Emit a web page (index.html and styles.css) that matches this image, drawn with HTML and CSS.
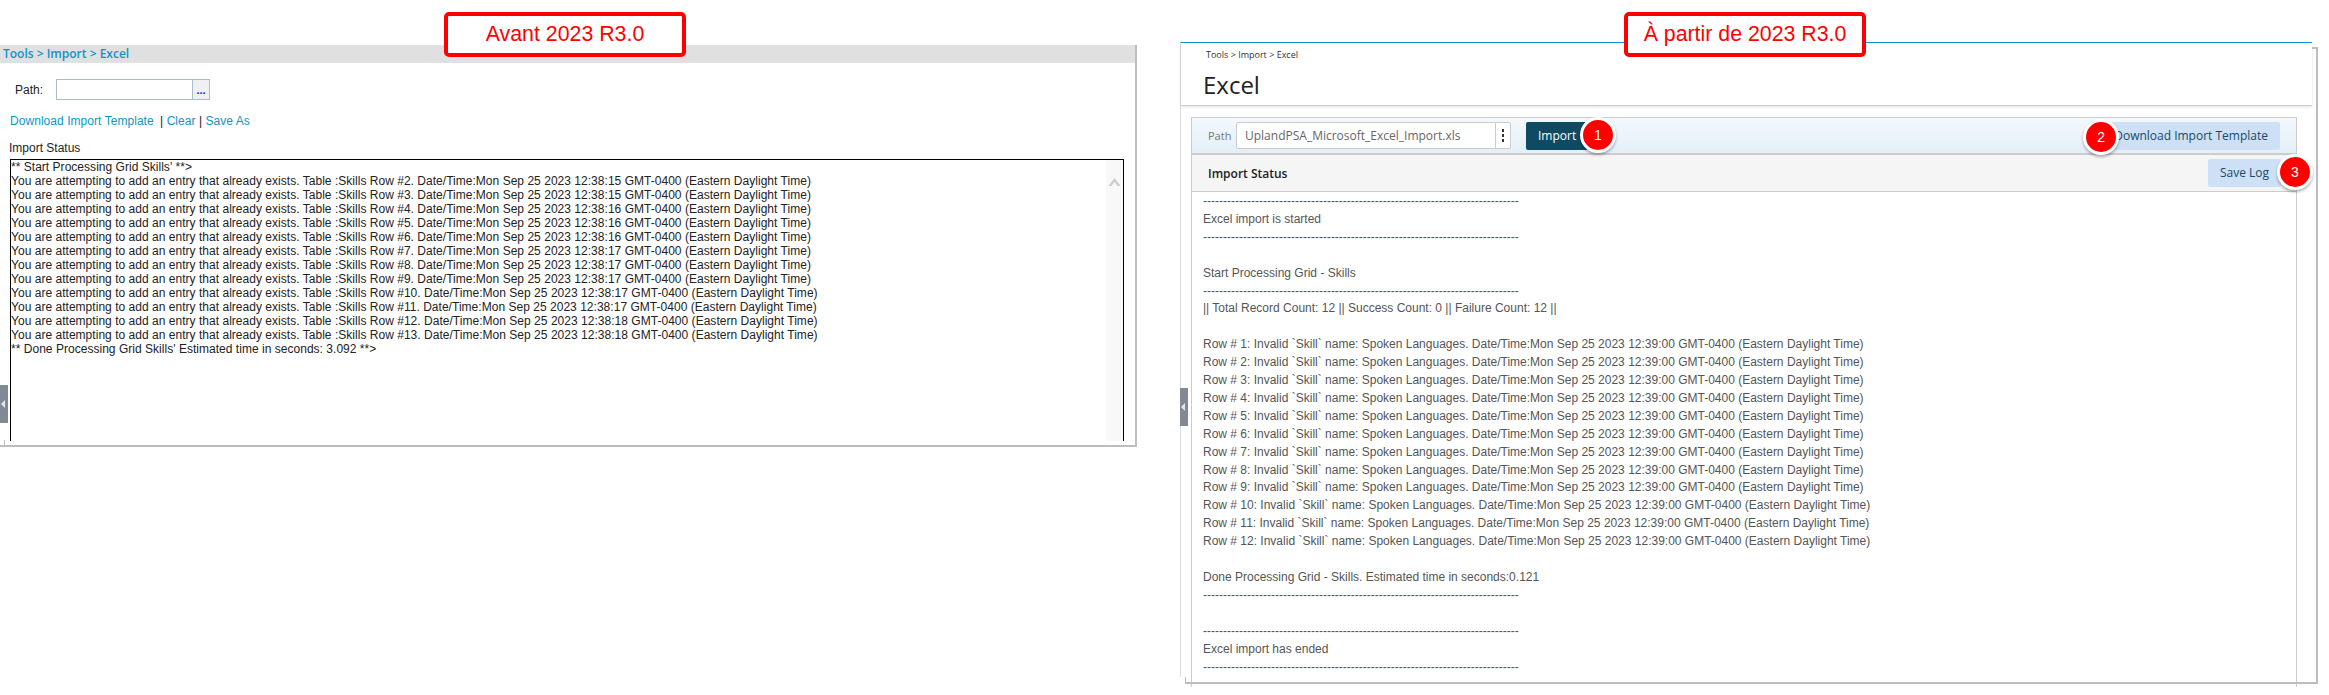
FILE: index.html
```html
<!DOCTYPE html>
<html lang="fr">
<head>
<meta charset="utf-8">
<title>Import Excel</title>
<link rel="stylesheet" href="styles.css">
</head>
<body>
<div class="stage">
  <section class="old">
    <div class="old-head">Tools &gt; Import &gt; Excel</div>
    <div class="old-path">
      <span class="old-path-label">Path:</span>
      <span class="old-input"></span>
      <span class="old-browse">...</span>
    </div>
    <div class="old-links"><a class="old-link-first">Download Import Template</a> | <a>Clear</a> | <a>Save As</a></div>
    <div class="old-status">Import Status</div>
    <div class="old-box">
      <div class="old-log">
        <div>** Start Processing Grid Skills' **&gt;</div>
        <div>You are attempting to add an entry that already exists. Table :Skills Row #2. Date/Time:Mon Sep 25 2023 12:38:15 GMT-0400 (Eastern Daylight Time)</div>
        <div>You are attempting to add an entry that already exists. Table :Skills Row #3. Date/Time:Mon Sep 25 2023 12:38:15 GMT-0400 (Eastern Daylight Time)</div>
        <div>You are attempting to add an entry that already exists. Table :Skills Row #4. Date/Time:Mon Sep 25 2023 12:38:16 GMT-0400 (Eastern Daylight Time)</div>
        <div>You are attempting to add an entry that already exists. Table :Skills Row #5. Date/Time:Mon Sep 25 2023 12:38:16 GMT-0400 (Eastern Daylight Time)</div>
        <div>You are attempting to add an entry that already exists. Table :Skills Row #6. Date/Time:Mon Sep 25 2023 12:38:16 GMT-0400 (Eastern Daylight Time)</div>
        <div>You are attempting to add an entry that already exists. Table :Skills Row #7. Date/Time:Mon Sep 25 2023 12:38:17 GMT-0400 (Eastern Daylight Time)</div>
        <div>You are attempting to add an entry that already exists. Table :Skills Row #8. Date/Time:Mon Sep 25 2023 12:38:17 GMT-0400 (Eastern Daylight Time)</div>
        <div>You are attempting to add an entry that already exists. Table :Skills Row #9. Date/Time:Mon Sep 25 2023 12:38:17 GMT-0400 (Eastern Daylight Time)</div>
        <div>You are attempting to add an entry that already exists. Table :Skills Row #10. Date/Time:Mon Sep 25 2023 12:38:17 GMT-0400 (Eastern Daylight Time)</div>
        <div>You are attempting to add an entry that already exists. Table :Skills Row #11. Date/Time:Mon Sep 25 2023 12:38:17 GMT-0400 (Eastern Daylight Time)</div>
        <div>You are attempting to add an entry that already exists. Table :Skills Row #12. Date/Time:Mon Sep 25 2023 12:38:18 GMT-0400 (Eastern Daylight Time)</div>
        <div>You are attempting to add an entry that already exists. Table :Skills Row #13. Date/Time:Mon Sep 25 2023 12:38:18 GMT-0400 (Eastern Daylight Time)</div>
        <div>** Done Processing Grid Skills' Estimated time in seconds: 3.092 **&gt;</div>
      </div>
      <div class="old-track">
        <svg class="chevron" width="11" height="9" viewBox="0 0 11 9"><path d="M0 8 L5.5 1 L11 8 L11 9 L8.5 9 L5.5 5 L2.5 9 L0 9 Z"/></svg>
      </div>
    </div>
    <div class="handle handle-old"><span class="handle-arrow"></span></div>
    <span class="tick tick-old"></span>
  </section>

  <section class="new">
    <div class="new-page">
      <header class="new-head">
        <div class="crumb">Tools &gt; Import &gt; Excel</div>
        <h1 class="new-title">Excel</h1>
      </header>
      <div class="new-body">
        <div class="toolbar">
          <span class="path-label">Path</span>
          <div class="path-input">
            <span class="path-value">UplandPSA_Microsoft_Excel_Import.xls</span>
            <span class="path-more"><i></i><i></i><i></i></span>
          </div>
          <button class="btn btn-dark">Import<span class="badge badge-1">1</span></button>
          <button class="btn btn-light btn-download">Download Import Template<span class="badge badge-2">2</span></button>
        </div>
        <div class="status-bar">
          <span class="status-title">Import Status</span>
          <button class="btn btn-light">Save Log<span class="badge badge-3">3</span></button>
        </div>
        <div class="new-log">
          <div>-------------------------------------------------------------------------------</div>
          <div>Excel import is started</div>
          <div>-------------------------------------------------------------------------------</div>
          <div class="blank"></div>
          <div>Start Processing Grid - Skills</div>
          <div>-------------------------------------------------------------------------------</div>
          <div>|| Total Record Count: 12 || Success Count: 0 || Failure Count: 12 ||</div>
          <div class="blank"></div>
          <div>Row # 1: Invalid `Skill` name: Spoken Languages. Date/Time:Mon Sep 25 2023 12:39:00 GMT-0400 (Eastern Daylight Time)</div>
          <div>Row # 2: Invalid `Skill` name: Spoken Languages. Date/Time:Mon Sep 25 2023 12:39:00 GMT-0400 (Eastern Daylight Time)</div>
          <div>Row # 3: Invalid `Skill` name: Spoken Languages. Date/Time:Mon Sep 25 2023 12:39:00 GMT-0400 (Eastern Daylight Time)</div>
          <div>Row # 4: Invalid `Skill` name: Spoken Languages. Date/Time:Mon Sep 25 2023 12:39:00 GMT-0400 (Eastern Daylight Time)</div>
          <div>Row # 5: Invalid `Skill` name: Spoken Languages. Date/Time:Mon Sep 25 2023 12:39:00 GMT-0400 (Eastern Daylight Time)</div>
          <div>Row # 6: Invalid `Skill` name: Spoken Languages. Date/Time:Mon Sep 25 2023 12:39:00 GMT-0400 (Eastern Daylight Time)</div>
          <div>Row # 7: Invalid `Skill` name: Spoken Languages. Date/Time:Mon Sep 25 2023 12:39:00 GMT-0400 (Eastern Daylight Time)</div>
          <div>Row # 8: Invalid `Skill` name: Spoken Languages. Date/Time:Mon Sep 25 2023 12:39:00 GMT-0400 (Eastern Daylight Time)</div>
          <div>Row # 9: Invalid `Skill` name: Spoken Languages. Date/Time:Mon Sep 25 2023 12:39:00 GMT-0400 (Eastern Daylight Time)</div>
          <div>Row # 10: Invalid `Skill` name: Spoken Languages. Date/Time:Mon Sep 25 2023 12:39:00 GMT-0400 (Eastern Daylight Time)</div>
          <div>Row # 11: Invalid `Skill` name: Spoken Languages. Date/Time:Mon Sep 25 2023 12:39:00 GMT-0400 (Eastern Daylight Time)</div>
          <div>Row # 12: Invalid `Skill` name: Spoken Languages. Date/Time:Mon Sep 25 2023 12:39:00 GMT-0400 (Eastern Daylight Time)</div>
          <div class="blank"></div>
          <div>Done Processing Grid - Skills. Estimated time in seconds:0.121</div>
          <div>-------------------------------------------------------------------------------</div>
          <div class="blank"></div>
          <div>-------------------------------------------------------------------------------</div>
          <div>Excel import has ended</div>
          <div>-------------------------------------------------------------------------------</div>
        </div>
      </div>
    </div>
    <div class="handle handle-new"><span class="handle-arrow"></span></div>
    <span class="tick tick-new-top"></span>
    <span class="tick tick-new-left"></span>
  </section>
</div>
<div class="callout callout-old">Avant 2023 R3.0</div>
<div class="callout callout-new">À partir de 2023 R3.0</div>
</body>
</html>
```

FILE: styles.css
```css
* { box-sizing: border-box; }
html, body { margin: 0; padding: 0; background: #fff; }
body {
  position: relative;
  width: 2329px;
  height: 695px;
  overflow: hidden;
  font-family: "Liberation Sans", Arial, sans-serif;
}
.stage { display: flex; align-items: flex-start; }

/* Before panel */
.old {
  position: relative;
  width: 1137px;
  height: 402px;
  margin-top: 45px;
  border-right: 2px solid #bdbdbd;
  border-bottom: 2px solid #bdbdbd;
  font-size: 12px;
  color: #222;
}
.old-head {
  height: 18px;
  padding-left: 3px;
  background: #e0e0e0;
  color: #0f94c8;
  font: 600 12px/18px "Open Sans", sans-serif;
}
.old-path { display: flex; align-items: center; height: 21px; margin-top: 16px; padding-left: 15px; }
.old-path-label { width: 41px; }
.old-input { width: 137px; height: 21px; background: #fff; border: 1px solid #a9bccb; }
.old-browse {
  width: 17px; height: 21px;
  background: #f0f0f0;
  border: 1px solid #a9bccb;
  border-left-width: 0;
  color: #1414e6;
  font: 700 11px/20px "Liberation Sans", sans-serif;
  text-align: center;
}
.old-links { margin-top: 14px; padding-left: 10px; line-height: 14px; letter-spacing: .05px; }
.old-links a { color: #0f94c8; }
.old-link-first { margin-right: 3px; }
.old-status { margin-top: 13px; padding-left: 9px; line-height: 14px; }
.old-box {
  display: flex;
  width: 1114px;
  height: 282px;
  margin-top: 4px;
  margin-left: 10px;
  border: 1px solid #000;
  border-bottom: 0;
}
.old-log { flex: 1; font-size: 12px; line-height: 14px; letter-spacing: .027px; }
.old-track { width: 17px; background: #f8f8f8; padding: 17px 3px 0; }
.chevron { display: block; fill: #cfcfcf; }

/* Side handles */
.handle {
  position: absolute;
  display: flex;
  align-items: center;
  width: 8px;
  height: 38px;
  background: #808a94;
}
.handle-old { left: 0; top: 340px; }
.handle-new { left: 0; top: 346px; }
.handle-arrow {
  width: 0; height: 0;
  margin-left: 1px;
  border-top: 4px solid transparent;
  border-bottom: 4px solid transparent;
  border-right: 4px solid #e4e6e8;
}

/* Frame ticks */
.tick { position: absolute; background: #bdbdbd; }
.tick-old { left: 4px; top: 395px; width: 1px; height: 6px; }
.tick-new-top { right: 2px; top: 5px; width: 4px; height: 2px; }
.tick-new-left { left: 5px; top: 635px; width: 1px; height: 7px; }

/* From-version panel */
.new {
  position: relative;
  width: 1138px;
  height: 642px;
  margin-top: 42px;
  margin-left: 43px;
  font-family: "Open Sans", sans-serif;
}
.new::after {
  content: "";
  position: absolute;
  left: 5px; top: 5px; right: 0; bottom: 0;
  border-right: 2px solid #bdbdbd;
  border-bottom: 2px solid #bdbdbd;
  pointer-events: none;
}
.new-page {
  width: 1132px;
  height: 635px;
  border-top: 1px solid #0a93c9;
  border-left: 1px solid #dcdcdc;
}
.new-head {
  height: 63px;
  padding-left: 25px;
  border-bottom: 1px solid #ccc;
  box-shadow: 0 1px 3px rgba(0, 0, 0, .12);
}
.crumb { padding-top: 6px; font-size: 9px; line-height: 12px; color: #333; }
.new-title { margin: 8px 0 0 -3px; font-size: 24px; line-height: 32px; font-weight: 400; color: #222; }
.new-body {
  width: 1106px;
  height: 570px;
  margin-top: 11px;
  margin-left: 10px;
  border-left: 1px solid #ccc;
  border-right: 1px solid #ccc;
}
.toolbar {
  display: flex;
  align-items: center;
  height: 38px;
  margin-left: -1px;
  margin-right: -1px;
  padding: 0 16px 0 16px;
  background: linear-gradient(#f3f8fc, #e3f0f8);
  border: 1px solid #ccc;
  border-bottom-width: 2px;
}
.path-label { width: 28px; font-size: 11px; color: #777; }
.path-input {
  display: flex;
  width: 275px;
  height: 27px;
  background: #fff;
  border: 1px solid #ccc;
  border-radius: 2px;
}
.path-value { flex: 1; padding-left: 8px; font-size: 12px; line-height: 25px; color: #666; }
.path-more {
  display: flex; flex-direction: column; align-items: center; justify-content: center; gap: 2px;
  width: 15px;
  border-left: 1px solid #ccc;
}
.path-more i { width: 2px; height: 3px; background: #333; }
.btn {
  position: relative;
  height: 28px;
  padding: 0 12px;
  border: 0;
  border-radius: 2px;
  font: 400 12px/28px "Open Sans", sans-serif;
}
.btn-dark { margin-left: 15px; width: 62px; background: #0e4a62; color: #fff; text-align: left; }
.btn-light { background: #cde0f5; color: #184a66; }
.btn-download { margin-left: auto; }
.status-bar {
  display: flex;
  align-items: center;
  justify-content: space-between;
  height: 37px;
  padding: 0 15px 0 16px;
  background: #f5f5f5;
  border-bottom: 1px solid #ccc;
}
.status-title { font-size: 12px; font-weight: 600; color: #222; }
.new-log { padding: 1px 0 0 11px; font: 12px/17.9px "Liberation Sans", sans-serif; color: #555; }
.blank { height: 17.9px; }

/* Numbered markers */
.badge {
  position: absolute;
  width: 36px;
  height: 36px;
  background: #f00;
  border: 3px solid #fff;
  border-radius: 50%;
  box-shadow: 0 2px 3px rgba(0, 0, 0, .3);
  color: #fff;
  font: 14px/30px "Liberation Sans", sans-serif;
  text-align: center;
}
.badge-1 { left: 54px; top: -5px; }
.badge-2 { left: -19px; top: -3px; }
.badge-3 { right: -32px; top: -5px; }

/* Version callouts */
.callout {
  position: absolute;
  top: 12px;
  width: 242px;
  height: 45px;
  background: #fff;
  border: 4px solid #f00;
  border-radius: 5px;
  color: #f00;
  font-size: 21.33px;
  line-height: 37px;
  text-align: center;
}
.callout-old { left: 444px; }
.callout-new { left: 1624px; }
```
